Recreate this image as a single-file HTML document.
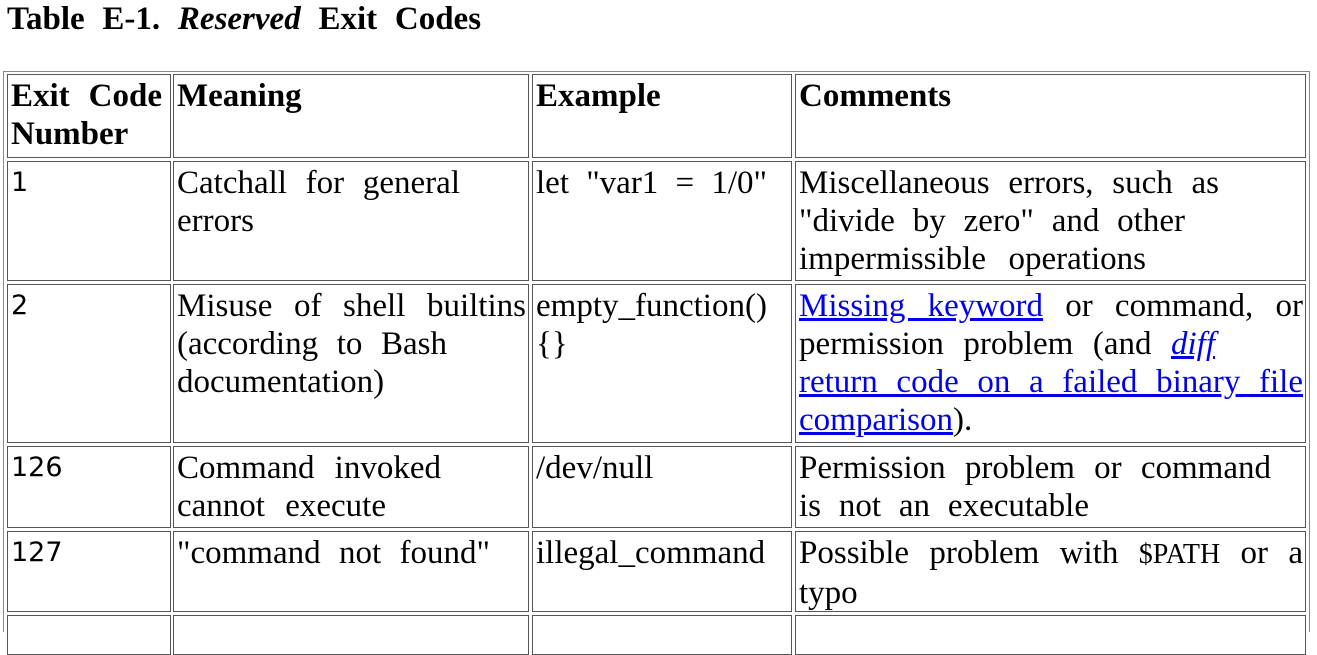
<!DOCTYPE html>
<html><head><meta charset="utf-8"><style>
body{margin:0;width:1317px;height:621px;overflow:hidden;background:#fff;font-family:"Liberation Serif",serif;color:#000}
.t{position:absolute;left:7px;top:0;font-size:33px;font-weight:bold;line-height:38px;word-spacing:9.5px;white-space:nowrap}
.tb{position:absolute;left:3px;top:71px;width:1305px;height:560px;border:1px solid #888;border-bottom:none}
.c{position:absolute;box-sizing:border-box;border:1px solid #555;padding:2px 2px 0 3px;font-size:33px;line-height:38px;overflow:hidden;word-spacing:5px}
.c div{text-align:justify;text-align-last:justify;white-space:nowrap}
.c div.l{text-align-last:left}
.h{font-weight:bold}
.n{font-family:"DejaVu Sans",sans-serif;font-size:27px}
a{color:#00e;text-decoration:underline}
</style></head><body>
<div class="t">Table E-1. <i>Reserved</i> Exit Codes</div>
<div class="tb"></div>
<div class="c h" style="left:7px;top:74px;width:164px;height:84px;word-spacing:0"><div style="width:151px">Exit Code</div><div class="l">Number</div></div>
<div class="c h" style="left:173px;top:74px;width:356px;height:84px"><div class="l">Meaning</div></div>
<div class="c h" style="left:532px;top:74px;width:260px;height:84px"><div class="l">Example</div></div>
<div class="c h" style="left:795px;top:74px;width:511px;height:84px"><div class="l">Comments</div></div>

<div class="c n" style="left:7px;top:161px;width:164px;height:120px"><div class="l">1</div></div>
<div class="c" style="left:173px;top:161px;width:356px;height:120px"><div style="width:283px">Catchall for general</div><div class="l">errors</div></div>
<div class="c" style="left:532px;top:161px;width:260px;height:120px"><div style="width:231px">let "var1 = 1/0"</div></div>
<div class="c" style="left:795px;top:161px;width:511px;height:120px"><div style="width:420px">Miscellaneous errors, such as</div><div style="width:386px">"divide by zero" and other</div><div style="width:347px">impermissible operations</div></div>

<div class="c n" style="left:7px;top:284px;width:164px;height:159px"><div class="l">2</div></div>
<div class="c" style="left:173px;top:284px;width:356px;height:159px"><div>Misuse of shell builtins</div><div style="width:270px">(according to Bash</div><div class="l">documentation)</div></div>
<div class="c" style="left:532px;top:284px;width:260px;height:159px"><div class="l">empty_function()</div><div class="l">{}</div></div>
<div class="c" style="left:795px;top:284px;width:511px;height:159px"><div><a>Missing keyword</a> or command, or</div><div style="width:416px">permission problem (and <a><i>diff</i></a></div><div><a>return code on a failed binary file</a></div><div class="l"><a>comparison</a>).</div></div>

<div class="c n" style="left:7px;top:446px;width:164px;height:82px"><div class="l">126</div></div>
<div class="c" style="left:173px;top:446px;width:356px;height:82px"><div style="width:264px">Command invoked</div><div style="width:209px">cannot execute</div></div>
<div class="c" style="left:532px;top:446px;width:260px;height:82px"><div class="l">/dev/null</div></div>
<div class="c" style="left:795px;top:446px;width:511px;height:82px"><div style="width:472px">Permission problem or command</div><div style="width:290px">is not an executable</div></div>

<div class="c n" style="left:7px;top:531px;width:164px;height:81px"><div class="l">127</div></div>
<div class="c" style="left:173px;top:531px;width:356px;height:81px"><div style="width:313px">"command not found"</div></div>
<div class="c" style="left:532px;top:531px;width:260px;height:81px"><div class="l">illegal_command</div></div>
<div class="c" style="left:795px;top:531px;width:511px;height:81px"><div>Possible problem with <span style="font-size:28px">$PATH</span> or a</div><div class="l">typo</div></div>

<div class="c" style="left:7px;top:615px;width:164px;height:40px"></div>
<div class="c" style="left:173px;top:615px;width:356px;height:40px"></div>
<div class="c" style="left:532px;top:615px;width:260px;height:40px"></div>
<div class="c" style="left:795px;top:615px;width:511px;height:40px"></div>
</body></html>
